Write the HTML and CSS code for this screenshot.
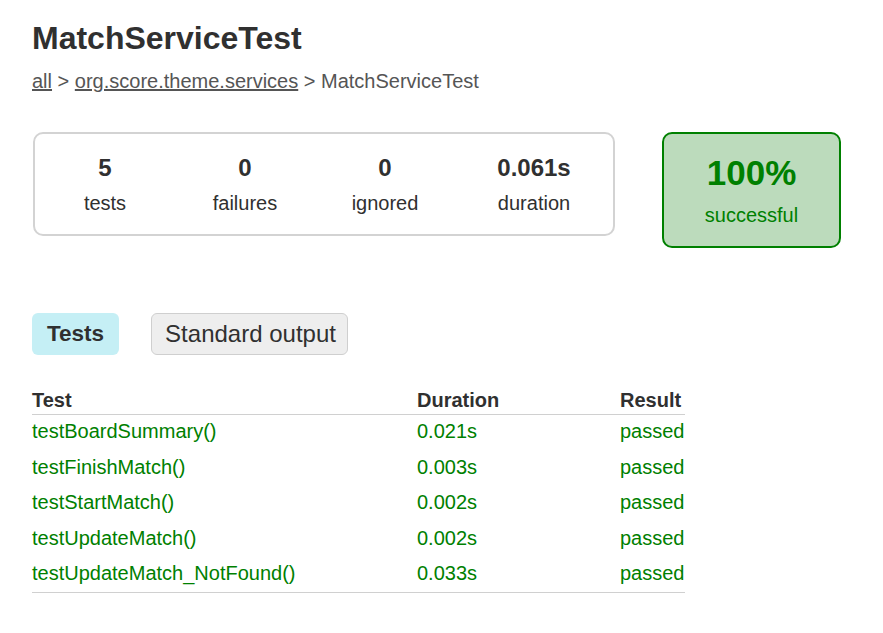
FILE: index.html
```html
<!DOCTYPE html>
<html lang="en">
<head>
<meta charset="utf-8">
<title>Test results - MatchServiceTest</title>
<link rel="stylesheet" href="styles.css">
</head>
<body>
<div class="page">
  <h1 class="title">MatchServiceTest</h1>
  <div class="breadcrumbs">
    <a href="#" class="crumb">all</a> &gt; <a href="#" class="crumb">org.score.theme.services</a> &gt; MatchServiceTest
  </div>

  <div class="summary">
    <div class="stats">
      <div class="stat">
        <div class="counter">5</div>
        <div class="label">tests</div>
      </div>
      <div class="stat">
        <div class="counter">0</div>
        <div class="label">failures</div>
      </div>
      <div class="stat">
        <div class="counter">0</div>
        <div class="label">ignored</div>
      </div>
      <div class="stat">
        <div class="counter">0.061s</div>
        <div class="label">duration</div>
      </div>
    </div>
    <div class="success">
      <div class="percent">100%</div>
      <div class="success-label">successful</div>
    </div>
  </div>

  <div class="tabs">
    <div class="tab tab-active">Tests</div>
    <div class="tab tab-inactive">Standard output</div>
  </div>

  <table class="results">
    <colgroup>
      <col class="col-test">
      <col class="col-duration">
      <col class="col-result">
    </colgroup>
    <thead>
      <tr>
        <th>Test</th>
        <th>Duration</th>
        <th>Result</th>
      </tr>
    </thead>
    <tbody>
      <tr><td>testBoardSummary()</td><td>0.021s</td><td>passed</td></tr>
      <tr><td>testFinishMatch()</td><td>0.003s</td><td>passed</td></tr>
      <tr><td>testStartMatch()</td><td>0.002s</td><td>passed</td></tr>
      <tr><td>testUpdateMatch()</td><td>0.002s</td><td>passed</td></tr>
      <tr><td>testUpdateMatch_NotFound()</td><td>0.033s</td><td>passed</td></tr>
    </tbody>
  </table>
</div>
</body>
</html>
```

FILE: styles.css
```css
html, body {
  margin: 0;
  padding: 0;
  background: #ffffff;
}

body {
  font-family: "Liberation Sans", Arial, sans-serif;
  color: #303030;
  font-size: 20px;
}

.page {
  padding: 20px 32px 0 32px;
}

.title {
  margin: 0;
  font-size: 32px;
  line-height: 37px;
  font-weight: bold;
  color: #303030;
}

.breadcrumbs {
  margin-top: 12px;
  font-size: 20px;
  line-height: 24px;
  color: #555555;
}

.crumb {
  color: #555555;
  text-decoration: underline;
}

.summary {
  margin-top: 39px;
  display: flex;
  align-items: flex-start;
}

.stats {
  box-sizing: border-box;
  width: 582px;
  margin-left: 1px;
  border: 2px solid #d3d3d3;
  border-radius: 10px;
  padding: 20px 0 19px 0;
  display: grid;
  grid-template-columns: 140px 140px 140px 1fr;
}

.stat {
  text-align: center;
}

.counter {
  font-size: 24px;
  line-height: 28px;
  font-weight: bold;
  color: #303030;
}

.label {
  margin-top: 9px;
  font-size: 20px;
  line-height: 24px;
  color: #303030;
}

.success {
  box-sizing: border-box;
  width: 179px;
  margin-left: 47px;
  border: 2px solid #008000;
  border-radius: 10px;
  background: #bcdbbc;
  padding: 19px 0 19px 0;
  text-align: center;
  color: #008000;
}

.percent {
  font-size: 35px;
  line-height: 40px;
  font-weight: bold;
}

.success-label {
  margin-top: 10px;
  font-size: 20px;
  line-height: 24px;
}

.tabs {
  margin-top: 65px;
  display: flex;
  gap: 32px;
}

.tab {
  box-sizing: border-box;
  height: 42px;
  border-radius: 6px;
  font-size: 22px;
  line-height: 26px;
  color: #303030;
}

.tab-active {
  background: #c5eff5;
  padding: 8px 15px 8px 15px;
  font-size: 22.5px;
  font-weight: bold;
}

.tab-inactive {
  background: #eeeeee;
  border: 1px solid #cfcfcf;
  padding: 7px 11px 7px 13px;
  font-size: 24px;
}

.results {
  margin-top: 33px;
  border-collapse: collapse;
  table-layout: fixed;
  width: 653px;
}

.col-test { width: 385px; }
.col-duration { width: 203px; }
.col-result { width: 65px; }

.results th {
  text-align: left;
  font-weight: bold;
  font-size: 20px;
  line-height: 23.5px;
  padding: 1px 0 1px 0;
  color: #303030;
  border-bottom: 1px solid #d0d0d0;
}

.results td {
  font-size: 20px;
  line-height: 23.5px;
  padding: 5.5px 0 6.5px 0;
  color: #008000;
  white-space: nowrap;
}

.results tbody tr:last-child td {
  border-bottom: 1px solid #d0d0d0;
}
```
